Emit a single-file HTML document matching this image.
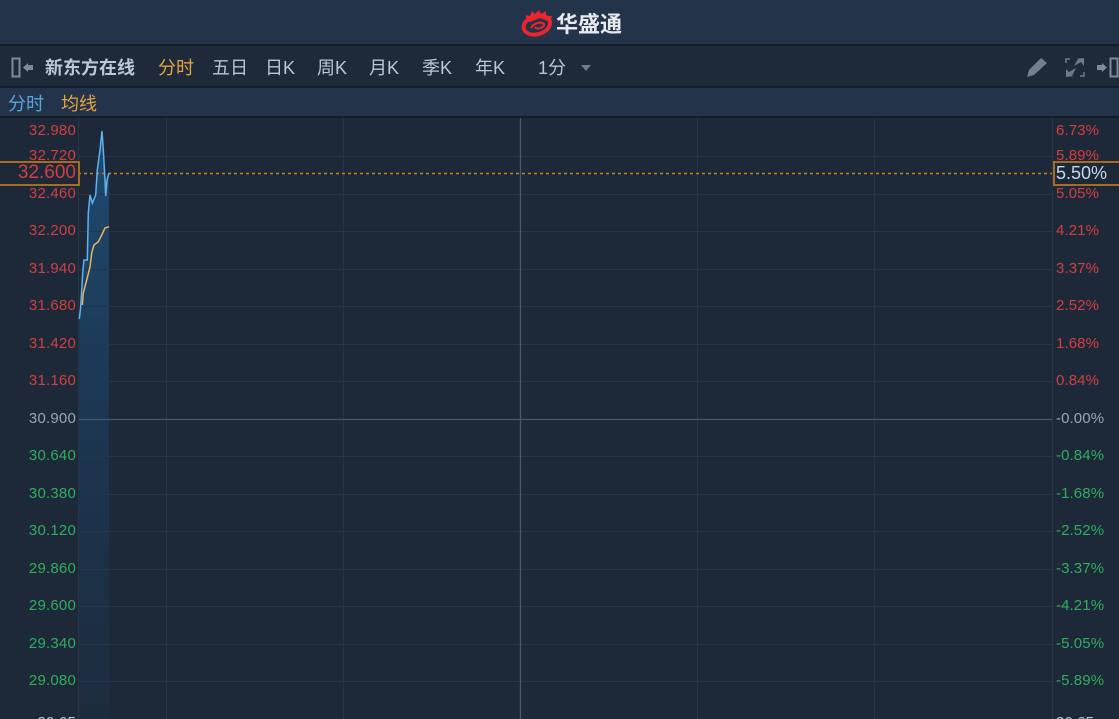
<!DOCTYPE html>
<html><head><meta charset="utf-8">
<style>
html,body{margin:0;padding:0;background:#1d2939;}
#p{position:relative;width:1119px;height:719px;overflow:hidden;background:#1d2939;font-family:"Liberation Sans","Noto Sans CJK SC",sans-serif;filter:blur(.35px);}
.b{position:absolute;left:0;width:1119px;}
.t{position:absolute;white-space:nowrap;line-height:20px;}
.tab{top:58px;font-size:18px;color:#b9c6d6;}
.l,.r{font-size:15px;line-height:18px;height:18px;}
.l{right:1043px;text-align:right;letter-spacing:.2px;}
.r{left:1056px;letter-spacing:.1px;}
.red{color:#d13f3f;}.grn{color:#2fae5c;}.gry{color:#9aa6b6;}
svg{position:absolute;left:0;top:0;}
</style></head><body><div id="p">
<div class="b" style="top:0;height:44px;background:#233349;"></div>
<div class="b" style="top:44px;height:2px;background:#141d29;"></div>
<div class="b" style="top:46px;height:40px;background:#1e2a3a;"></div>
<div class="b" style="top:86px;height:2px;background:#141d29;"></div>
<div class="b" style="top:88px;height:28px;background:#233349;"></div>
<div class="b" style="top:116px;height:2px;background:#141d29;"></div>

<svg width="1119" height="719" viewBox="0 0 1119 719">
<defs><linearGradient id="g" x1="0" y1="0" x2="0" y2="1"><stop offset="0" stop-color="#1f4a72"/><stop offset=".5" stop-color="#1c3650"/><stop offset="1" stop-color="#1d2b3d"/></linearGradient></defs>
<path d="M79.300 319L80.700 306.700L82.700 273L84 260L87.300 260L88.300 213L90 195L92.300 203L95.700 195L97.300 170L100 150L102 131L103.300 150L105 180L105.700 196L107 180L109 173V719H79Z" fill="url(#g)"/>
<g stroke="#273548" stroke-width="1" fill="none">
<path d="M79 156.500H1052M79 194.500H1052M79 231.500H1052M79 269.500H1052M79 306.500H1052M79 344.500H1052M79 381.500H1052M79 456.500H1052M79 494.500H1052M79 531.500H1052M79 569.500H1052M79 606.500H1052M79 644.500H1052M79 681.500H1052"/>
<path d="M78.500 118V719M166.500 118V719M343.500 118V719M697.500 118V719M874.500 118V719M1052.500 118V719"/>
</g>
<path d="M79 419.500H1052M520.500 118V719" stroke="#47586e" stroke-width="1.300" fill="none"/>
<path d="M78 173.500H1052" stroke="#d07c12" stroke-width="1.500" stroke-dasharray="3 3" fill="none"/>
<path d="M79.300 319L80.700 306.700L82.700 273L84 260L87.300 260L88.300 213L90 195L92.300 203L95.700 195L97.300 170L100 150L102 131L103.300 150L105 180L105.700 196L107 180L109 173" fill="none" stroke="#5fb2ee" stroke-width="1.500"/>
<path d="M82.300 305L83.300 293L86.700 280L90 267L91.700 253L94 245L98.300 241.700L101.700 235L105 228L109 226.700" fill="none" stroke="#e3b55c" stroke-width="1.500"/>
<!-- logo -->
<g fill="none" stroke="#e8262c">
<path d="M525 31C520 23 529 17 540 16C549 16 552 21 549 27C545 34 531 38 525 31Z" stroke-width="4"/>
<path d="M531 28C534 23 541 21 544 24C544 28 537 30 535 27" stroke-width="2.200"/>
</g>
<path d="M526 20L526 15L530 16L532 11L535 14L539 10L541 14L546 11L546 16L552 16L550 22L540 18L530 22Z" fill="#e8262c"/>
<!-- left icon -->
<rect x="12.500" y="58.500" width="7" height="18" fill="none" stroke="#7f8a98" stroke-width="2"/>
<path d="M23 67.500L28 63V65H33V70H28V72Z" fill="#7f8a98"/>
<!-- triangle -->
<path d="M581 65H591L586 71Z" fill="#6f7b89"/>
<!-- pencil -->
<path d="M1027 77L1029 70L1041 58L1047 63L1034 75Z" fill="#747f8d"/>
<!-- expand -->
<g fill="#6f7a88">
<path d="M1074 66L1078 59H1075L1084 58L1084 66L1081 62Z"/>
<path d="M1076 68L1072 76H1075L1066 77L1066 69L1069 72Z"/>
</g>
<path d="M1066 63V59H1070M1080 76H1084V72" fill="none" stroke="#6f7a88" stroke-width="1.500"/>
<!-- right icon -->
<path d="M1107 67.500L1102 63V65H1097V70H1102V72Z" fill="#7f8a98"/>
<rect x="1110.500" y="58.500" width="7" height="18" fill="none" stroke="#7f8a98" stroke-width="2"/>
</svg>

<div class="t" style="left:556px;top:15px;font-size:22px;font-weight:bold;color:#e6e9ee;">华盛通</div>

<div class="t tab" style="left:45px;font-weight:bold;color:#bcc8d8;">新东方在线</div>
<div class="t tab" style="left:158px;color:#e3a53f;">分时</div>
<div class="t tab" style="left:212px;">五日</div>
<div class="t tab" style="left:265px;">日K</div>
<div class="t tab" style="left:317px;">周K</div>
<div class="t tab" style="left:369px;">月K</div>
<div class="t tab" style="left:422px;">季K</div>
<div class="t tab" style="left:475px;">年K</div>
<div class="t tab" style="left:538px;">1分</div>

<div class="t" style="left:8px;top:94px;font-size:18px;color:#5aa3e0;">分时</div>
<div class="t" style="left:61px;top:94px;font-size:18px;color:#e3a53f;">均线</div>

<div class="t l red" style="top:122px;">32.980</div>
<div class="t l red" style="top:147px;">32.720</div>
<div class="t l red" style="top:185px;">32.460</div>
<div class="t l red" style="top:222px;">32.200</div>
<div class="t l red" style="top:260px;">31.940</div>
<div class="t l red" style="top:297px;">31.680</div>
<div class="t l red" style="top:335px;">31.420</div>
<div class="t l red" style="top:372px;">31.160</div>
<div class="t l gry" style="top:410px;">30.900</div>
<div class="t l grn" style="top:447px;">30.640</div>
<div class="t l grn" style="top:485px;">30.380</div>
<div class="t l grn" style="top:522px;">30.120</div>
<div class="t l grn" style="top:560px;">29.860</div>
<div class="t l grn" style="top:597px;">29.600</div>
<div class="t l grn" style="top:635px;">29.340</div>
<div class="t l grn" style="top:672px;">29.080</div>
<div class="t l" style="top:714px;color:#b9c6d6;">30.65</div>

<div class="t r red" style="top:122px;">6.73%</div>
<div class="t r red" style="top:147px;">5.89%</div>
<div class="t r red" style="top:185px;">5.05%</div>
<div class="t r red" style="top:222px;">4.21%</div>
<div class="t r red" style="top:260px;">3.37%</div>
<div class="t r red" style="top:297px;">2.52%</div>
<div class="t r red" style="top:335px;">1.68%</div>
<div class="t r red" style="top:372px;">0.84%</div>
<div class="t r gry" style="top:410px;">-0.00%</div>
<div class="t r grn" style="top:447px;">-0.84%</div>
<div class="t r grn" style="top:485px;">-1.68%</div>
<div class="t r grn" style="top:522px;">-2.52%</div>
<div class="t r grn" style="top:560px;">-3.37%</div>
<div class="t r grn" style="top:597px;">-4.21%</div>
<div class="t r grn" style="top:635px;">-5.05%</div>
<div class="t r grn" style="top:672px;">-5.89%</div>
<div class="t r" style="top:714px;color:#b9c6d6;">30.65</div>

<div style="position:absolute;left:-3px;top:161px;width:79px;height:21px;border:2px solid #a86c20;background:#1d2939;"></div>
<div class="t" style="right:1043px;top:163px;font-size:19px;color:#d13f3f;">32.600</div>
<div style="position:absolute;left:1053px;top:161px;width:70px;height:21px;border:2px solid #a86c20;background:#1d2939;"></div>
<div class="t" style="left:1056px;top:163px;font-size:18px;color:#c6d7ea;">5.50%</div>
</div></body></html>
